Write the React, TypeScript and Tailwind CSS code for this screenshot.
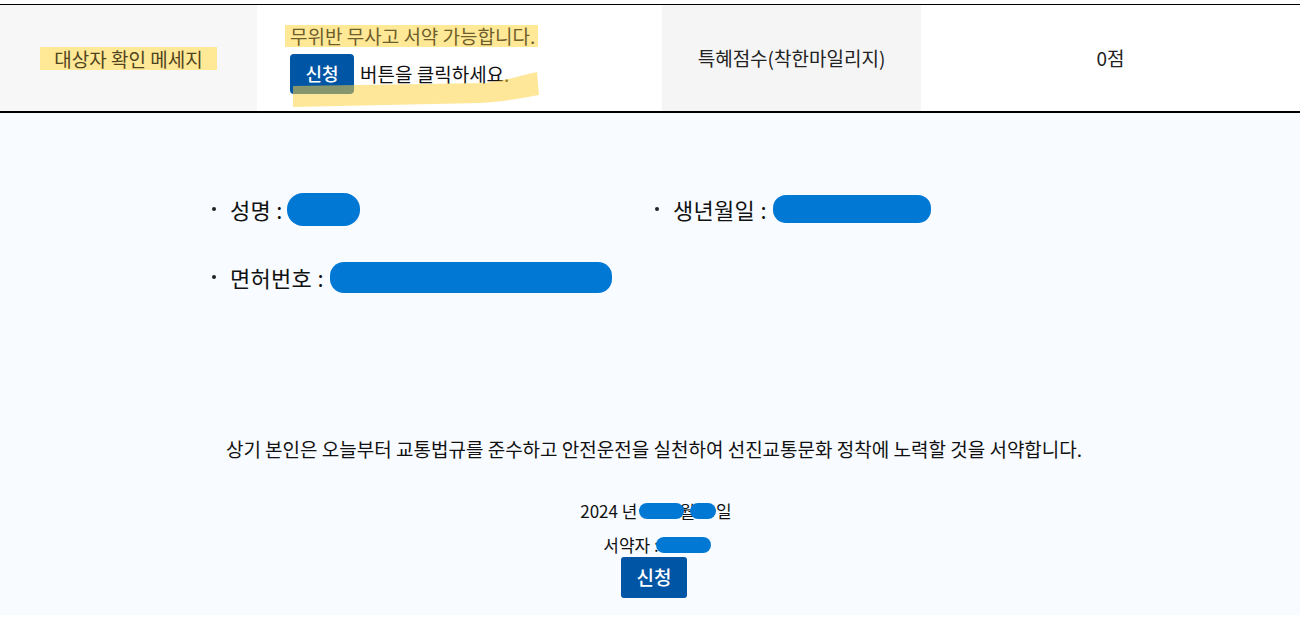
import React from "react";

const font = { fontFamily: '"Noto Sans CJK KR", "Noto Sans", sans-serif' };

// 가려진 개인정보 영역 (파란 마스킹)
const Blob = ({ className }: { className: string }) => (
  <span className={`inline-block bg-[#0078d4] align-middle ${className}`} />
);

const Field = ({ label, blob }: { label: string; blob: string }) => (
  <div className="flex items-center h-[34px] text-[22px] text-[#111] leading-none">
    <span className="w-[4px] h-[4px] rounded-full bg-[#222] ml-[7px] mr-[14px]" />
    <span className="tracking-[0.3px]">{label} :</span>
    <Blob className={blob} />
  </div>
);

export default function App() {
  return (
    <div style={font} className="w-[1300px] h-[617px] bg-white overflow-hidden">
      {/* 상단 정보 테이블 */}
      <div className="mt-[4px] border-t border-black flex h-[107px] text-[19px]">
        <div className="w-[257px] bg-[#f7f7f7] flex items-center justify-center">
          <span className="bg-[#ffe896] px-[14px] py-[1px] text-[#4f4420] leading-[21px]">대상자 확인 메세지</span>
        </div>
        <div className="relative w-[405px] bg-white flex flex-col justify-center pl-[33px]">
          <div>
            <span className="inline-block -ml-[5px] pl-[5px] pr-[3px] bg-[#ffe896] text-[#6e5e2c] leading-[22px]">
              무위반 무사고 서약 가능합니다.
            </span>
          </div>
          <div className="flex items-center mt-[3px]">
            <span className="w-[64px] h-[40px] rounded-[4px] bg-[#0055a5] text-white text-[18px] font-medium flex items-center justify-center">
              신청
            </span>
            <span className="ml-[6px] text-[#111]">버튼을 클릭하세요.</span>
          </div>
          <svg className="absolute left-[33px] top-[65px]" width="254" height="40" viewBox="0 0 254 40">
            <path
              d="M3 16 L195 13 C215 11 232 5 247 2 L249 25 C232 28 212 32 190 33 L3 37 Z"
              fill="#ffd13b"
              fillOpacity="0.52"
            />
          </svg>
        </div>
        <div className="w-[259px] bg-[#f5f5f5] flex items-center justify-center text-[#222]">특혜점수(착한마일리지)</div>
        <div className="flex-1 bg-white flex items-center justify-center text-[#222]">0점</div>
      </div>

      {/* 서약 본문 */}
      <div className="border-t-2 border-black bg-[#f8fbff] h-[504px] pt-[79px]">
        <div className="ml-[205px] w-[886px] grid grid-cols-2 gap-y-[34px]">
          <Field label="성명" blob="ml-[4px] w-[73px] h-[33px] rounded-[16px]" />
          <Field label="생년월일" blob="ml-[6px] w-[158px] h-[28px] rounded-[13px]" />
          <Field label="면허번호" blob="ml-[6px] w-[282px] h-[31px] rounded-[14px]" />
        </div>

        <p className="mt-[142px] pl-[8px] text-center text-[19px] text-[#111] leading-[26px]">
          상기 본인은 오늘부터 교통법규를 준수하고 안전운전을 실천하여 선진교통문화 정착에 노력할 것을 서약합니다.
        </p>

        <div className="mt-[37px] pl-[8px] flex flex-col items-center text-[17px] text-[#111]">
          <div className="flex items-center h-[24px] pl-[4px]">
            <span>2024 년</span>
            <Blob className="relative z-10 ml-[2px] w-[45px] h-[16px] rounded-full" />
            <span className="-ml-[5px]">월</span>
            <Blob className="relative z-10 -ml-[5px] w-[26px] h-[16px] rounded-full" />
            <span>일</span>
          </div>
          <div className="flex items-center h-[24px] mt-[10px] pl-[6px]">
            <span>서약자 :</span>
            <Blob className="relative z-10 -ml-[3px] w-[55px] h-[16px] rounded-full" />
          </div>
          <span className="mt-[0px] w-[66px] h-[41px] rounded-[3px] bg-[#0055a5] text-white text-[19px] font-medium flex items-center justify-center">
            신청
          </span>
        </div>
      </div>
    </div>
  );
}
